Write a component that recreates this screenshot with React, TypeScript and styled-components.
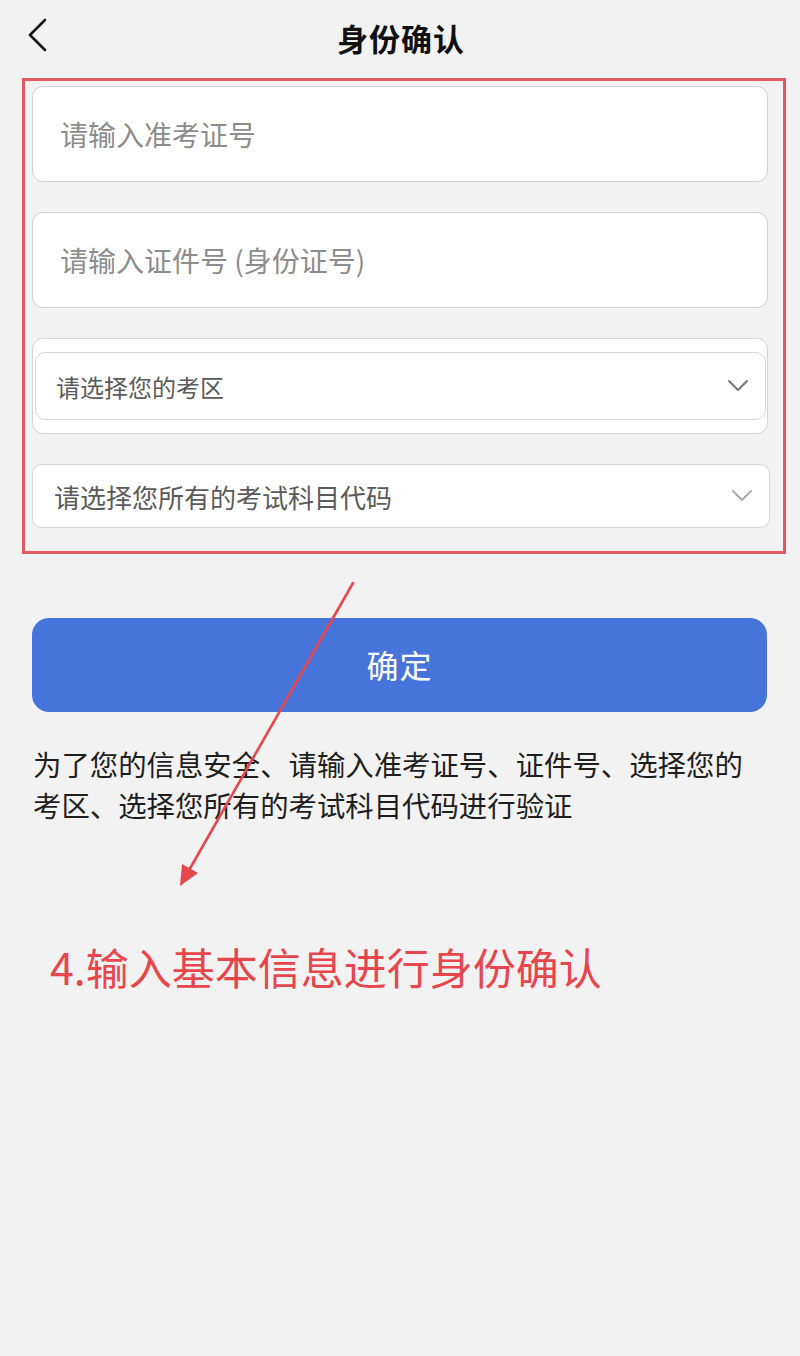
import React from "react";
import styled, { createGlobalStyle } from "styled-components";

const Global = createGlobalStyle`
  html, body { margin: 0; padding: 0; background: #f2f2f2; }
  * { box-sizing: border-box; }
  body { font-family: "Noto Sans CJK SC", "Noto Sans", sans-serif; }
`;

const RED = "#e8464d";

const Page = styled.div`
  position: relative;
  width: 800px;
  min-height: 1356px;
  background: #f2f2f2;
  display: flex;
  flex-direction: column;
`;

const Header = styled.header`
  height: 78px;
  display: grid;
  grid-template-columns: 1fr auto 1fr;
  align-items: center;
  padding: 0 24px 4px 26px;
`;

const BackButton = styled.button`
  justify-self: start;
  width: 30px;
  height: 40px;
  padding: 0;
  margin-top: -4px;
  border: none;
  background: none;
  display: flex;
  align-items: center;
  justify-content: flex-start;
  color: #111;
`;

const Title = styled.h1`
  margin: 0;
  font-size: 31px;
  font-weight: 700;
  color: #111;
  letter-spacing: 1px;
`;

const FormPanel = styled.section`
  margin: 0 14px 0 22px;
  border: 3px solid #e45a60;
  padding: 5px 15px 23px 7px;
  display: flex;
  flex-direction: column;
  gap: 30px;
`;

const TextField = styled.div`
  height: 96px;
  background: #fff;
  border: 1.5px solid #d0d0d0;
  border-radius: 11px;
  display: flex;
  align-items: center;
  padding-left: 27px;
  font-size: 28px;
  color: #8c8c8c;
`;

const SelectShell = styled.div`
  height: 96px;
  background: #fff;
  border: 1.5px solid #d4d4d4;
  border-radius: 11px;
  display: flex;
  align-items: center;
  padding: 0 1px 0 2px;
`;

const SelectBox = styled.div<{ $h: number; $fs: number; $pl: number; $mr?: number }>`
  flex: 1 0 auto;
  height: ${(p) => p.$h}px;
  background: #fff;
  border: 1.5px solid #d8d8d8;
  border-radius: 10px;
  display: flex;
  align-items: center;
  justify-content: space-between;
  padding: 0 16px 0 ${(p) => p.$pl}px;
  margin-right: ${(p) => p.$mr ?? 0}px;
  font-size: ${(p) => p.$fs}px;
  color: #5a5a5a;
`;

const Chevron = ({ color }: { color: string }) => (
  <svg width="22" height="14" viewBox="0 0 22 14">
    <path d="M2 2 L11 11 L20 2" fill="none" stroke={color} strokeWidth="2" strokeLinecap="round" strokeLinejoin="round" />
  </svg>
);

const ConfirmButton = styled.button`
  margin: 64px 33px 0 32px;
  height: 94px;
  padding-bottom: 4px;
  border: none;
  border-radius: 17px;
  background: #4674da;
  color: #fff;
  font-family: inherit;
  font-size: 32px;
  letter-spacing: 1px;
`;

const Notice = styled.p`
  margin: 31px 40px 0 33px;
  font-size: 28.4px;
  line-height: 41px;
  color: #1e1e1e;
`;

const Caption = styled.div`
  margin: 115px 0 0 50px;
  font-size: 43px;
  line-height: 52px;
  color: ${RED};
`;

const Overlay = styled.svg`
  position: absolute;
  left: 0;
  top: 0;
  pointer-events: none;
`;

export default function App() {
  return (
    <Page>
      <Global />
      <Header>
        <BackButton aria-label="返回">
          <svg width="22" height="34" viewBox="0 0 22 34">
            <path d="M19 2 L4 17 L19 32" fill="none" stroke="#111" strokeWidth="2.6" strokeLinecap="round" strokeLinejoin="round" />
          </svg>
        </BackButton>
        <Title>身份确认</Title>
        <span />
      </Header>

      <FormPanel>
        <TextField>请输入准考证号</TextField>
        <TextField>请输入证件号 (身份证号)</TextField>
        <SelectShell>
          <SelectBox $h={68} $fs={24} $pl={20}>
            请选择您的考区
            <Chevron color="#777" />
          </SelectBox>
        </SelectShell>
        <SelectBox $h={64} $fs={26} $pl={21} $mr={-2}>
          请选择您所有的考试科目代码
          <Chevron color="#aaa" />
        </SelectBox>
      </FormPanel>

      <ConfirmButton>确定</ConfirmButton>

      <Notice>
        为了您的信息安全、请输入准考证号、证件号、选择您的考区、选择您所有的考试科目代码进行验证
      </Notice>

      <Caption>4.输入基本信息进行身份确认</Caption>

      <Overlay width="800" height="1356" viewBox="0 0 800 1356">
        <line x1="353" y1="583" x2="188" y2="872" stroke={RED} strokeWidth="2.6" strokeLinecap="round" />
        <polygon points="180,886 198,873 182,864" fill={RED} />
      </Overlay>
    </Page>
  );
}
